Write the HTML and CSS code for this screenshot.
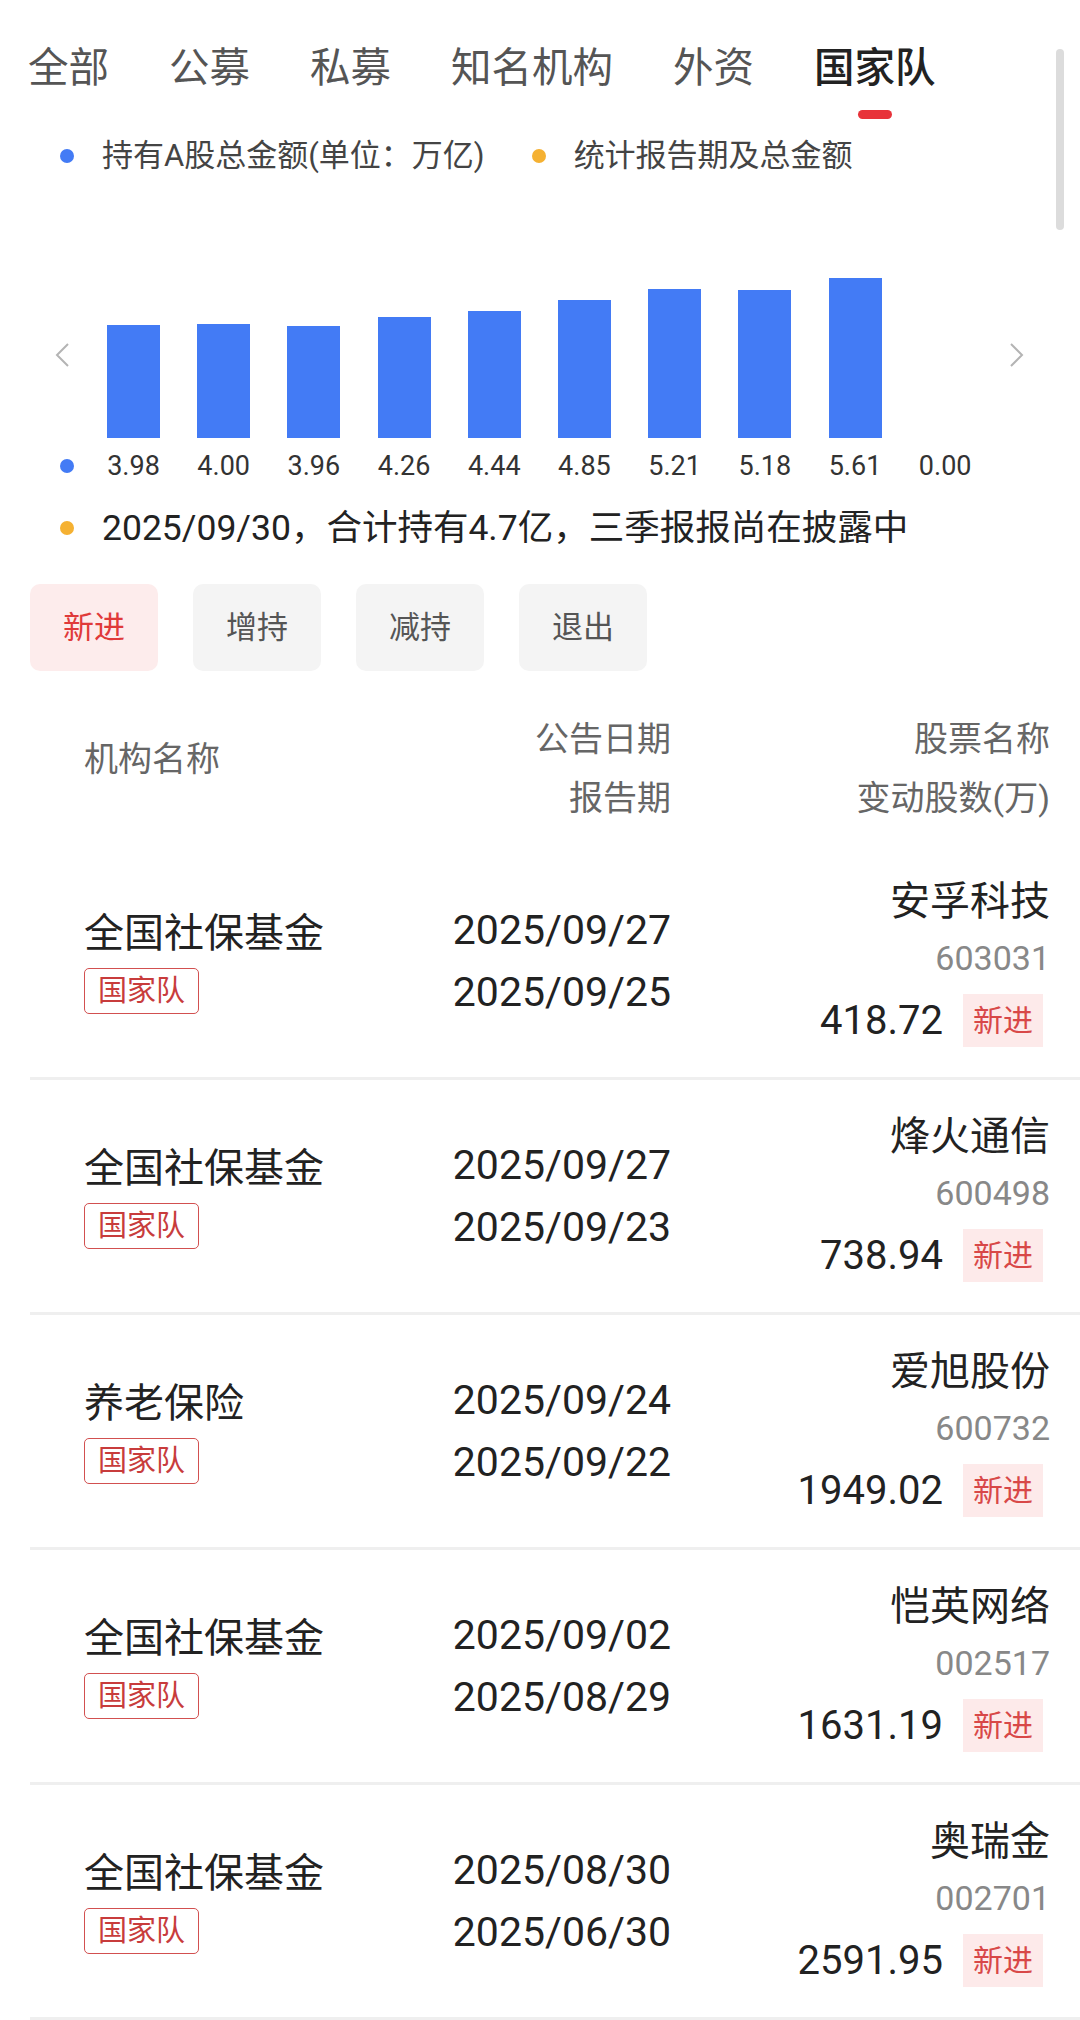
FILE: index.html
```html
<!DOCTYPE html>
<html lang="zh-CN">
<head>
  <meta charset="UTF-8" />
  <meta name="viewport" content="width=device-width, initial-scale=1.0"/>
  <title>国家队持仓</title>
  <link rel="stylesheet" href="styles.css">
</head>
<body>

  <div class="page">
    <nav class="tabs">
      <span class="tab">全部</span>
      <span class="tab">公募</span>
      <span class="tab">私募</span>
      <span class="tab">知名机构</span>
      <span class="tab">外资</span>
      <span class="tab active">国家队<i class="bar-line"></i></span>
    </nav>

    <div class="legend">
      <span class="dot blue"></span><span class="legend-text">持有A股总金额(单位：万亿)</span>
      <span class="dot orange"></span><span class="legend-text">统计报告期及总金额</span>
    </div>

    <div class="chart">
      <svg class="chev left" width="15" height="24" viewBox="0 0 15 24"><polyline points="13,1 2,12 13,23" fill="none" stroke="#b4b4b4" stroke-width="2"/></svg>
      <div class="bars">
        <div class="slot"><div class="bar" style="height:113px"></div></div>
        <div class="slot"><div class="bar" style="height:114px"></div></div>
        <div class="slot"><div class="bar" style="height:112px"></div></div>
        <div class="slot"><div class="bar" style="height:121px"></div></div>
        <div class="slot"><div class="bar" style="height:127px"></div></div>
        <div class="slot"><div class="bar" style="height:138px"></div></div>
        <div class="slot"><div class="bar" style="height:149px"></div></div>
        <div class="slot"><div class="bar" style="height:148px"></div></div>
        <div class="slot"><div class="bar" style="height:160px"></div></div>
        <div class="slot"></div>
      </div>
      <svg class="chev right" width="15" height="24" viewBox="0 0 15 24"><polyline points="2,1 13,12 2,23" fill="none" stroke="#b4b4b4" stroke-width="2"/></svg>
    </div>

    <div class="values">
      <span class="dot blue"></span>
      <div class="labels">
        <span>3.98</span><span>4.00</span><span>3.96</span><span>4.26</span><span>4.44</span>
        <span>4.85</span><span>5.21</span><span>5.18</span><span>5.61</span><span>0.00</span>
      </div>
    </div>

    <div class="summary">
      <span class="dot orange"></span>
      <span>2025/09/30，合计持有4.7亿，三季报报尚在披露中</span>
    </div>

    <div class="filters">
      <span class="filter on">新进</span>
      <span class="filter">增持</span>
      <span class="filter">减持</span>
      <span class="filter">退出</span>
    </div>

    <div class="thead">
      <div class="c1 head-name">机构名称</div>
      <div class="c2">公告日期<br>报告期</div>
      <div class="c3">股票名称<br>变动股数(万)</div>
    </div>

    <div class="row">
      <div class="c1"><div class="org">全国社保基金</div><span class="tag">国家队</span></div>
      <div class="c2 dates">2025/09/27<br>2025/09/25</div>
      <div class="c3">
        <div class="stock">安孚科技</div>
        <div class="code">603031</div>
        <div class="amount"><span>418.72</span><span class="new">新进</span></div>
      </div>
    </div>

    <div class="row">
      <div class="c1"><div class="org">全国社保基金</div><span class="tag">国家队</span></div>
      <div class="c2 dates">2025/09/27<br>2025/09/23</div>
      <div class="c3">
        <div class="stock">烽火通信</div>
        <div class="code">600498</div>
        <div class="amount"><span>738.94</span><span class="new">新进</span></div>
      </div>
    </div>

    <div class="row">
      <div class="c1"><div class="org">养老保险</div><span class="tag">国家队</span></div>
      <div class="c2 dates">2025/09/24<br>2025/09/22</div>
      <div class="c3">
        <div class="stock">爱旭股份</div>
        <div class="code">600732</div>
        <div class="amount"><span>1949.02</span><span class="new">新进</span></div>
      </div>
    </div>

    <div class="row">
      <div class="c1"><div class="org">全国社保基金</div><span class="tag">国家队</span></div>
      <div class="c2 dates">2025/09/02<br>2025/08/29</div>
      <div class="c3">
        <div class="stock">恺英网络</div>
        <div class="code">002517</div>
        <div class="amount"><span>1631.19</span><span class="new">新进</span></div>
      </div>
    </div>

    <div class="row">
      <div class="c1"><div class="org">全国社保基金</div><span class="tag">国家队</span></div>
      <div class="c2 dates">2025/08/30<br>2025/06/30</div>
      <div class="c3">
        <div class="stock">奥瑞金</div>
        <div class="code">002701</div>
        <div class="amount"><span>2591.95</span><span class="new">新进</span></div>
      </div>
    </div>
  </div>

  <div class="scrollbar"></div>

</body>
</html>
```

FILE: styles.css
```css
body { margin: 0; background: #fff; font-family: Roboto, "Noto Sans CJK SC", sans-serif; color: #222; }
.page { padding-top: 40px; overflow: hidden; height: 1980px; }

.tabs { display: flex; align-items: flex-start; gap: 60px; padding-left: 28px; }
.tab { display: flex; flex-direction: column; align-items: center; font-size: 40.5px; line-height: 56px; color: #555; }
.tab.active { color: #222; font-weight: 500; }
.bar-line { display: block; width: 34px; height: 9px; margin-top: 14px; border-radius: 5px; background: #e8333a; }

.dot { display: inline-block; width: 14px; height: 14px; border-radius: 50%; flex-shrink: 0; }
.dot.blue { background: #437bf5; }
.dot.orange { background: #f5b132; }

.legend { display: flex; align-items: center; margin-top: 15px; padding-left: 60px; font-size: 31px; line-height: 44px; color: #444; }
.legend .dot { margin-right: 28px; }
.legend .dot.orange { margin-left: 47px; }

.chart { display: flex; margin-top: 80px; padding-left: 55px; }
.chev { align-self: flex-end; margin-bottom: 71px; }
.chev.left { margin-right: 37px; }
.chev.right { margin-left: 37px; }
.bars { display: flex; gap: 37.2px; height: 180px; align-items: flex-end; }
.slot { width: 53px; }
.bar { background: #437bf5; }

.values { display: flex; align-items: center; margin-top: 10px; padding-left: 60px; }
.values .dot { margin-right: 33px; }
.labels { display: flex; gap: 37.2px; }
.labels span { width: 53px; text-align: center; white-space: nowrap; font-size: 27px; line-height: 36px; color: #333; }

.summary { display: flex; align-items: center; margin-top: 20px; padding-left: 60px; font-size: 35.5px; line-height: 48px; color: #222; }
.summary .dot { margin-right: 28px; }

.filters { display: flex; gap: 35px; margin-top: 32px; padding-left: 30px; }
.filter {
  width: 128px; height: 87px; line-height: 87px; text-align: center;
  font-size: 31px; color: #555; background: #f4f4f4; border-radius: 10px;
}
.filter.on { background: #fdecec; color: #e03a3a; }

.thead, .row {
  display: grid; grid-template-columns: 300px 287px 1fr; align-items: center;
  margin-left: 30px; padding: 0 30px 0 54px;
}
.c2, .c3 { text-align: right; }
.thead { margin-top: 39px; padding-bottom: 17px; font-size: 34px; line-height: 59px; color: #666; }
.head-name { margin-bottom: 19px; }

.row { height: 232px; border-bottom: 3px solid #efefef; }
.org { font-size: 40px; line-height: 50px; color: #222; }
.tag {
  display: inline-block; margin-top: 9px; padding: 0 13px;
  font-size: 29px; line-height: 44px; color: #c83c3c;
  border: 1.5px solid #d25050; border-radius: 5px;
}
.dates { font-size: 41px; line-height: 62px; color: #222; }
.stock { font-size: 40px; line-height: 52px; color: #222; }
.code { font-size: 34px; line-height: 60px; color: #888; }
.amount { display: flex; justify-content: flex-end; align-items: center; gap: 20px; margin-top: 6px; font-size: 40px; }
.new { height: 53px; line-height: 53px; margin-right: 7px; padding: 0 10px; font-size: 30px; color: #d84848; background: #fdeaea; }

.scrollbar { position: absolute; top: 49px; left: 1056px; width: 8px; height: 181px; border-radius: 4px; background: #dcdcdc; }
```
